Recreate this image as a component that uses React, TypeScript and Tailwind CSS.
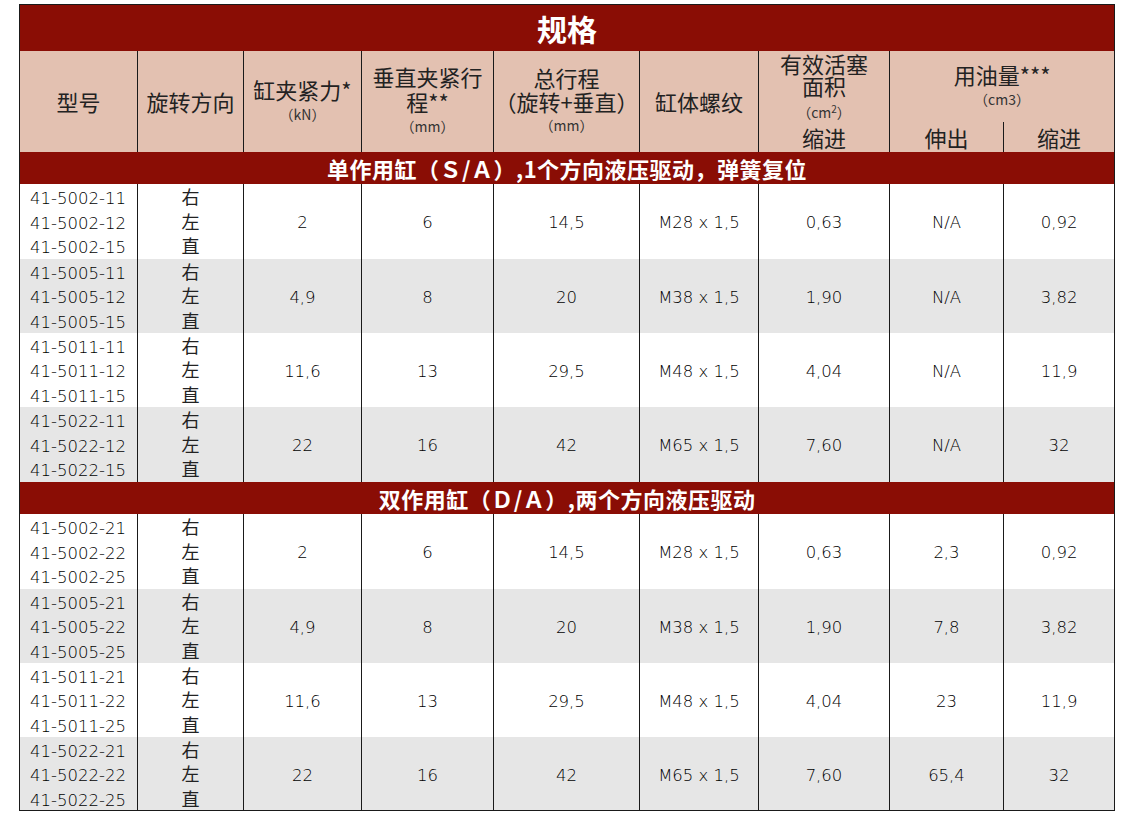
import React from "react";

interface Group {
  base: string;
  suffixes: string[];
  force: string;
  vstroke: string;
  total: string;
  thread: string;
  area: string;
  extend: string;
  retract: string;
}

const CJK = "font-['Noto_Sans_CJK_SC',sans-serif]";
const NUM = "font-['DejaVu_Sans','Noto_Sans_CJK_SC',sans-serif] font-extralight text-black";

const singleActing: Group[] = [
  { base: "41-5002-", suffixes: ["11", "12", "15"], force: "2", vstroke: "6", total: "14,5", thread: "M28 x 1,5", area: "0,63", extend: "N/A", retract: "0,92" },
  { base: "41-5005-", suffixes: ["11", "12", "15"], force: "4,9", vstroke: "8", total: "20", thread: "M38 x 1,5", area: "1,90", extend: "N/A", retract: "3,82" },
  { base: "41-5011-", suffixes: ["11", "12", "15"], force: "11,6", vstroke: "13", total: "29,5", thread: "M48 x 1,5", area: "4,04", extend: "N/A", retract: "11,9" },
  { base: "41-5022-", suffixes: ["11", "12", "15"], force: "22", vstroke: "16", total: "42", thread: "M65 x 1,5", area: "7,60", extend: "N/A", retract: "32" },
];

const doubleActing: Group[] = [
  { base: "41-5002-", suffixes: ["21", "22", "25"], force: "2", vstroke: "6", total: "14,5", thread: "M28 x 1,5", area: "0,63", extend: "2,3", retract: "0,92" },
  { base: "41-5005-", suffixes: ["21", "22", "25"], force: "4,9", vstroke: "8", total: "20", thread: "M38 x 1,5", area: "1,90", extend: "7,8", retract: "3,82" },
  { base: "41-5011-", suffixes: ["21", "22", "25"], force: "11,6", vstroke: "13", total: "29,5", thread: "M48 x 1,5", area: "4,04", extend: "23", retract: "11,9" },
  { base: "41-5022-", suffixes: ["21", "22", "25"], force: "22", vstroke: "16", total: "42", thread: "M65 x 1,5", area: "7,60", extend: "65,4", retract: "32" },
];

// row heights taken from the sheet, first group to last
const groupHeights = [
  ["h-[75px]", "h-[74px]", "h-[74px]", "h-[75px]"],
  ["h-[75px]", "h-[74px]", "h-[74px]", "h-[74px]"],
];

const directions = ["右", "左", "直"];

const cell = "border-x border-[#1a1a1a] p-0 align-middle";

// section banner row (dark red)
function SectionRow({ title }: { title: string }) {
  return (
    <tr className="h-[32px] bg-[#8a0d05]">
      <td colSpan={9} className={`p-0 text-center text-[22px] font-bold leading-none tracking-[0.5px] text-white ${CJK}`}>
        {title}
      </td>
    </tr>
  );
}

function GroupRow({ g, shaded, height }: { g: Group; shaded: boolean; height: string }) {
  const values = [g.force, g.vstroke, g.total, g.thread, g.area, g.extend, g.retract];
  return (
    <tr className={`${height} ${shaded ? "bg-[#e6e6e6]" : "bg-white"}`}>
      <td className={`${cell} pl-[10px] text-[16.5px] ${NUM}`}>
        {/* taller line box than the div, so the digits sit a little lower */}
        {g.suffixes.map((s) => (
          <div key={s} className="h-[24.6px] leading-[29px]">
            {g.base}
            {s}
          </div>
        ))}
      </td>
      <td className={`${cell} text-center text-[18px] leading-[24.6px] text-[#222] ${CJK}`}>
        {directions.map((d) => (
          <div key={d}>{d}</div>
        ))}
      </td>
      {values.map((v, i) => (
        <td key={i} className={`${cell} pt-[5px] text-center text-[16.5px] ${NUM}`}>
          {v}
        </td>
      ))}
    </tr>
  );
}

function Unit({ children }: { children: React.ReactNode }) {
  return <div className="text-[14px] leading-[24px] text-[#333]">{children}</div>;
}

export default function App() {
  return (
    <div className="min-h-[818px] w-[1135px] bg-white pl-[19px] pt-[4px] [text-spacing-trim:space-all]">
      <table className="w-[1095px] table-fixed border-collapse border border-[#1a1a1a]">
        <colgroup>
          <col className="w-[118px]" />
          <col className="w-[106px]" />
          <col className="w-[118px]" />
          <col className="w-[132px]" />
          <col className="w-[146px]" />
          <col className="w-[119px]" />
          <col className="w-[131px]" />
          <col className="w-[114px]" />
          <col className="w-[111px]" />
        </colgroup>
        <thead>
          <tr className="h-[46px] bg-[#8a0d05]">
            <th colSpan={9} className={`p-0 text-center text-[30px] font-bold leading-none text-white ${CJK}`}>
              规格
            </th>
          </tr>
          <tr className={`h-[71px] bg-[#e3c1b1] text-[22px] font-normal text-[#222] ${CJK}`}>
            <th rowSpan={2} className={`${cell} font-normal`}>型号</th>
            <th rowSpan={2} className={`${cell} font-normal`}>旋转方向</th>
            <th rowSpan={2} className={`${cell} font-normal`}>
              <div className="leading-[25px]">缸夹紧力*</div>
              <Unit>（kN）</Unit>
            </th>
            <th rowSpan={2} className={`${cell} font-normal`}>
              <div className="leading-[25px]">垂直夹紧行</div>
              <div className="leading-[25px]">程**</div>
              <Unit>（mm）</Unit>
            </th>
            <th rowSpan={2} className={`${cell} font-normal`}>
              <div className="leading-[23px]">总行程</div>
              <div className="leading-[24px]">（旋转+垂直）</div>
              <Unit>（mm）</Unit>
            </th>
            <th rowSpan={2} className={`${cell} font-normal`}>缸体螺纹</th>
            <th rowSpan={2} className={`${cell} pb-[4px] font-normal`}>
              <div className="leading-[22px]">有效活塞</div>
              <div className="leading-[22px]">面积</div>
              <div className="text-[14px] leading-[32px] text-[#333]">
                （cm<sup className="text-[10px]">2</sup>）
              </div>
              <div className="leading-[18px]">缩进</div>
            </th>
            <th colSpan={2} className={`${cell} font-normal`}>
              <div className="leading-[26px]">用油量***</div>
              <Unit>（cm3）</Unit>
            </th>
          </tr>
          <tr className={`h-[30px] bg-[#e3c1b1] text-[22px] text-[#222] ${CJK}`}>
            <th className={`${cell} font-normal leading-[28px]`}>伸出</th>
            <th className={`${cell} font-normal leading-[28px]`}>缩进</th>
          </tr>
        </thead>
        <tbody>
          <SectionRow title="单作用缸（Ｓ/Ａ）,1个方向液压驱动，弹簧复位" />
          {singleActing.map((g, i) => (
            <GroupRow key={g.base + "s"} g={g} shaded={i % 2 === 1} height={groupHeights[0][i]} />
          ))}
          <SectionRow title="双作用缸（Ｄ/Ａ）,两个方向液压驱动" />
          {doubleActing.map((g, i) => (
            <GroupRow key={g.base + "d"} g={g} shaded={i % 2 === 1} height={groupHeights[1][i]} />
          ))}
        </tbody>
      </table>
    </div>
  );
}
